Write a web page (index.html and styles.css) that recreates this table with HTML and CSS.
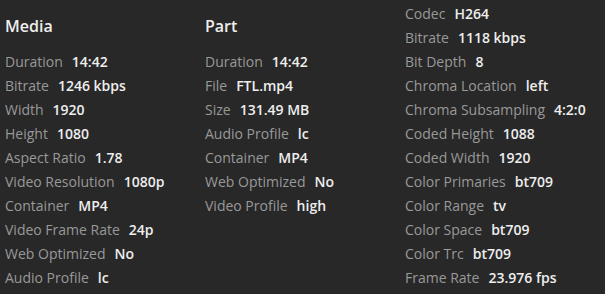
FILE: index.html
```html
<!DOCTYPE html>
<html>
<head>
<meta charset="utf-8">
<link rel="stylesheet" href="styles.css">
</head>
<body>
<div class="grid">
  <section class="col">
    <h2 class="title">Media</h2>
    <div class="row"><span class="k">Duration</span><span class="v">14:42</span></div>
    <div class="row"><span class="k">Bitrate</span><span class="v">1246 kbps</span></div>
    <div class="row"><span class="k">Width</span><span class="v">1920</span></div>
    <div class="row"><span class="k">Height</span><span class="v">1080</span></div>
    <div class="row"><span class="k">Aspect Ratio</span><span class="v">1.78</span></div>
    <div class="row"><span class="k">Video Resolution</span><span class="v">1080p</span></div>
    <div class="row"><span class="k">Container</span><span class="v">MP4</span></div>
    <div class="row"><span class="k">Video Frame Rate</span><span class="v">24p</span></div>
    <div class="row"><span class="k">Web Optimized</span><span class="v">No</span></div>
    <div class="row"><span class="k">Audio Profile</span><span class="v">lc</span></div>
  </section>
  <section class="col">
    <h2 class="title">Part</h2>
    <div class="row"><span class="k">Duration</span><span class="v">14:42</span></div>
    <div class="row"><span class="k">File</span><span class="v">FTL.mp4</span></div>
    <div class="row"><span class="k">Size</span><span class="v">131.49 MB</span></div>
    <div class="row"><span class="k">Audio Profile</span><span class="v">lc</span></div>
    <div class="row"><span class="k">Container</span><span class="v">MP4</span></div>
    <div class="row"><span class="k">Web Optimized</span><span class="v">No</span></div>
    <div class="row"><span class="k">Video Profile</span><span class="v">high</span></div>
  </section>
  <section class="col">
    <div class="row"><span class="k">Codec</span><span class="v">H264</span></div>
    <div class="row"><span class="k">Bitrate</span><span class="v">1118 kbps</span></div>
    <div class="row"><span class="k">Bit Depth</span><span class="v">8</span></div>
    <div class="row"><span class="k">Chroma Location</span><span class="v">left</span></div>
    <div class="row"><span class="k">Chroma Subsampling</span><span class="v">4:2:0</span></div>
    <div class="row"><span class="k">Coded Height</span><span class="v">1088</span></div>
    <div class="row"><span class="k">Coded Width</span><span class="v">1920</span></div>
    <div class="row"><span class="k">Color Primaries</span><span class="v">bt709</span></div>
    <div class="row"><span class="k">Color Range</span><span class="v">tv</span></div>
    <div class="row"><span class="k">Color Space</span><span class="v">bt709</span></div>
    <div class="row"><span class="k">Color Trc</span><span class="v">bt709</span></div>
    <div class="row"><span class="k">Frame Rate</span><span class="v">23.976 fps</span></div>
  </section>
</div>
</body>
</html>
```
FILE: styles.css
```css
html, body {
  margin: 0;
  padding: 0;
  background: #282828;
  height: 100%;
}
body {
  font-family: "Open Sans", "Liberation Sans", sans-serif;
  font-size: 14px;
  color: #eeeeee;
}
.grid {
  display: flex;
  padding: 2px 0 0 5px;
}
.col {
  width: 200px;
  flex: none;
}
.title {
  margin: 0;
  padding-top: 12px;
  margin-bottom: 12px;
  line-height: 24px;
  font-size: 16px;
  font-weight: 600;
  color: #eeeeee;
}
.row {
  height: 24px;
  line-height: 24px;
  white-space: nowrap;
}
.k {
  color: #999999;
  margin-right: 9px;
}
.v {
  font-weight: 600;
  color: #eeeeee;
}
```
